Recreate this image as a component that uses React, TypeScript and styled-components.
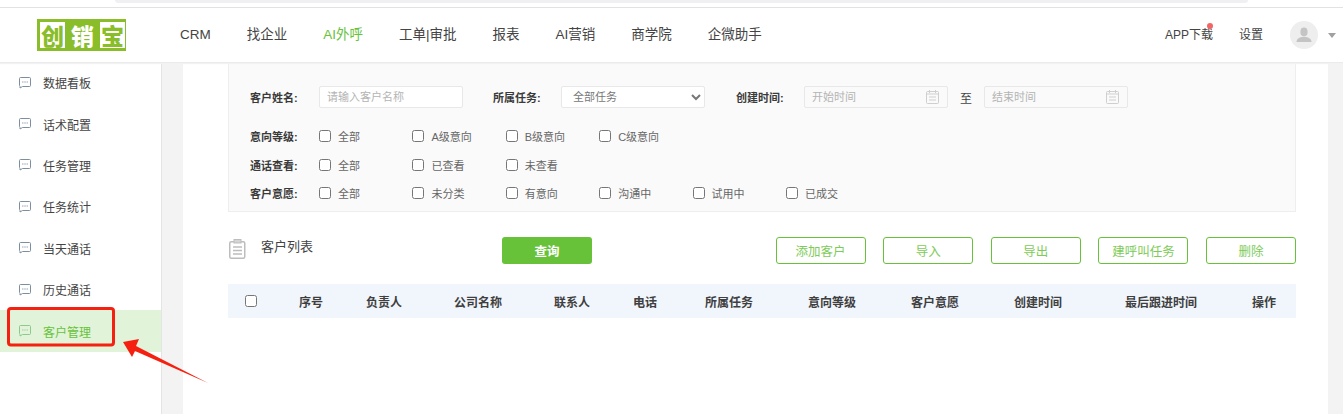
import React from "react";
import styled, { createGlobalStyle } from "styled-components";

const Global = createGlobalStyle`
  html, body { margin: 0; padding: 0; background: #fff; }
  body { font-family: "Liberation Sans", "Noto Sans CJK SC", sans-serif; color: #333; }
  * { box-sizing: border-box; }
`;

const Page = styled.div`
  position: relative;
  width: 1343px;
  height: 414px;
  overflow: hidden;
  display: flex;
  flex-direction: column;
`;

const BrowserStrip = styled.div`
  height: 8px;
  padding-left: 115px;
  padding-right: 95px;
  border-bottom: 1px solid #e2e2e2;
  flex: none;
`;
const StripTab = styled.div`
  height: 3px;
  background: #f0f0f3;
  border-radius: 0 0 8px 8px;
`;

const Header = styled.header`
  height: 55px;
  flex: none;
  display: flex;
  align-items: center;
  padding-left: 37px;
  border-bottom: 1px solid #ebebeb;
  box-shadow: 0 1px 1px #f2f2f2;
  position: relative;
  z-index: 1;
  background: #fff;
`;

const Logo = styled.div`
  width: 89px;
  height: 32px;
  background: #8abd2a;
  display: flex;
  align-items: center;
  gap: 5px;
  padding-left: 3px;
  flex: none;
`;
const LogoChar = styled.span<{ $inverse?: boolean }>`
  width: 25px;
  height: 26px;
  background: ${(p) => (p.$inverse ? "transparent" : "#fff")};
  color: ${(p) => (p.$inverse ? "#fff" : "#8abd2a")};
  font: 900 23px/26px "Noto Sans CJK SC", sans-serif;
  display: flex;
  align-items: center;
  justify-content: center;
`;

const Nav = styled.nav`
  display: flex;
  gap: 36px;
  margin-left: 54px;
  margin-top: -1px;
`;
const NavItem = styled.span<{ $active?: boolean }>`
  font-size: 13.5px;
  line-height: 20px;
  white-space: nowrap;
  color: ${(p) => (p.$active ? "#67c23a" : "#444")};
`;

const HeaderRight = styled.div`
  margin-left: auto;
  display: flex;
  align-items: center;
  padding-right: 7px;
`;
const HeaderLink = styled.span`
  position: relative;
  font-size: 12px;
  line-height: 18px;
  color: #444;
  white-space: nowrap;
  margin-right: 26px;
`;
const RedDot = styled.i`
  position: absolute;
  top: -3px;
  right: 0;
  width: 6px;
  height: 6px;
  border-radius: 50%;
  background: #f56464;
`;
const Avatar = styled.div`
  width: 28px;
  height: 28px;
  margin-left: 1px;
  border-radius: 50%;
  background: #eeeeee;
  display: flex;
  align-items: center;
  justify-content: center;
`;
const Caret = styled.i`
  width: 0;
  height: 0;
  margin-left: 10px;
  border-left: 4.5px solid transparent;
  border-right: 4.5px solid transparent;
  border-top: 5px solid #a0a0a0;
`;

const Body = styled.div`
  flex: 1;
  display: flex;
  background: #f3f3f3;
  min-height: 0;
`;

const Sidebar = styled.aside`
  width: 162px;
  flex: none;
  margin-top: -1px;
  background: #fff;
  border-right: 1px solid #e4e4e4;
`;
const SideItem = styled.div<{ $active?: boolean }>`
  height: 41.4px;
  display: flex;
  align-items: center;
  padding-left: 19px;
  gap: 12px;
  font-size: 12px;
  color: ${(p) => (p.$active ? "#67c23a" : "#444")};
  background: ${(p) => (p.$active ? "#e1f3d8" : "transparent")};
  svg { color: ${(p) => (p.$active ? "#8cc98c" : "#7d8e9e")}; flex: none; }
`;

const Main = styled.main`
  margin-left: 21px;
  width: 1145px;
  background: #fff;
  padding: 0 32px 0 45px;
`;

const FilterPanel = styled.section`
  height: 149px;
  background: #fafafa;
  border: 1px solid #eeeeee;
  border-top: none;
  padding: 23px 0 0 21px;
`;
const FieldRow = styled.div`
  display: flex;
  align-items: center;
  height: 22px;
  margin-bottom: 14px;
`;
const Label = styled.label<{ $w?: number }>`
  width: ${(p) => p.$w ?? 69}px;
  flex: none;
  font-size: 11px;
  font-weight: 700;
  color: #3a3a3a;
  white-space: nowrap;
`;
const FieldGap = styled.div<{ $w: number }>`
  width: ${(p) => p.$w}px;
  flex: none;
`;
const TextInput = styled.input`
  width: 144px;
  height: 22px;
  flex: none;
  padding: 0 7px;
  border: 1px solid #e8e8e8;
  border-radius: 2px;
  background: #fff;
  font: 11px "Liberation Sans", "Noto Sans CJK SC", sans-serif;
  color: #666;
  outline: none;
  &::placeholder { color: #b4b4b4; }
`;
const Select = styled.select`
  width: 144px;
  height: 22px;
  flex: none;
  padding: 0 7px;
  border: 1px solid #e8e8e8;
  border-radius: 2px;
  background: #fff;
  font: 11px "Liberation Sans", "Noto Sans CJK SC", sans-serif;
  color: #777;
  outline: none;
`;
const DateBox = styled.div`
  width: 144px;
  height: 22px;
  flex: none;
  display: flex;
  align-items: center;
  padding: 0 8px 0 7px;
  border: 1px solid #e8e8e8;
  border-radius: 2px;
  background: #fafafa;
  color: #cfcfcf;
`;
const DateInput = styled.input`
  flex: 1;
  width: 0;
  border: none;
  padding: 0;
  background: transparent;
  outline: none;
  font: 11px "Liberation Sans", "Noto Sans CJK SC", sans-serif;
  &::placeholder { color: #b4b4b4; }
`;
const ToText = styled.span`
  width: 36px;
  flex: none;
  text-align: center;
  font-size: 12px;
  color: #444;
`;

const CheckRow = styled.div`
  display: flex;
  align-items: center;
  height: 28.5px;
`;
const CheckCell = styled.label`
  width: 93.4px;
  flex: none;
  display: flex;
  align-items: center;
  gap: 7px;
  font-size: 11px;
  color: #666;
  white-space: nowrap;
`;
const Check = styled.input.attrs({ type: "checkbox" })`
  width: 12px;
  height: 12px;
  margin: 0;
  flex: none;
`;

const Toolbar = styled.div`
  display: flex;
  align-items: flex-start;
  margin-top: 25px;
  height: 27px;
`;
const TitleBlock = styled.div`
  width: 274px;
  flex: none;
  display: flex;
  align-items: flex-start;
  gap: 15px;
  padding-left: 1px;
  padding-top: 2px;
`;
const Title = styled.span`
  font-size: 13px;
  line-height: 14px;
  color: #444;
  padding-top: 1px;
`;
const PrimaryButton = styled.button`
  width: 90px;
  height: 27px;
  flex: none;
  border: none;
  border-radius: 3px;
  background: #67c23a;
  color: #fff;
  font: 700 12.5px "Liberation Sans", "Noto Sans CJK SC", sans-serif;
  padding: 0;
`;
const ActionGroup = styled.div`
  margin-left: auto;
  display: flex;
  gap: 17.6px;
`;
const GhostButton = styled.button`
  width: 90px;
  height: 27px;
  border: 1px solid #67c23a;
  border-radius: 3px;
  background: #fff;
  color: #7ecb58;
  font: 12.5px "Liberation Sans", "Noto Sans CJK SC", sans-serif;
  padding: 0;
`;

const TableHead = styled.div`
  margin-top: 20px;
  height: 34px;
  background: #f1f6fd;
  display: grid;
  grid-template-columns: 71px 67px 88px 100px 79px 72px 103px 103px 103px 111px 127px 44px;
  align-items: center;
  font-size: 12px;
  font-weight: 700;
  color: #3f3f3f;
  white-space: nowrap;
`;
const HeadCheck = styled(Check)`
  margin: -1px 0 0 17px;
`;

const Annotation = styled.svg`
  position: absolute;
  left: 0;
  top: 0;
  pointer-events: none;
`;

const navItems = ["CRM", "找企业", "AI外呼", "工单|审批", "报表", "AI营销", "商学院", "企微助手"];
const sideItems = ["数据看板", "话术配置", "任务管理", "任务统计", "当天通话", "历史通话", "客户管理"];
const checkRows: [string, string[]][] = [
  ["意向等级:", ["全部", "A级意向", "B级意向", "C级意向"]],
  ["通话查看:", ["全部", "已查看", "未查看"]],
  ["客户意愿:", ["全部", "未分类", "有意向", "沟通中", "试用中", "已成交"]],
];
const actions = ["添加客户", "导入", "导出", "建呼叫任务", "删除"];
const columns = ["序号", "负责人", "公司名称", "联系人", "电话", "所属任务", "意向等级", "客户意愿", "创建时间", "最后跟进时间", "操作"];

const ChatIcon = () => (
  <svg width="12" height="12" viewBox="0 0 12 12" fill="none" stroke="currentColor" strokeWidth="1">
    <path d="M1.5.5h9a1 1 0 0 1 1 1v7a1 1 0 0 1-1 1H3.5L1 11V9.5A1 1 0 0 1 .5 8.5v-7a1 1 0 0 1 1-1z" />
    <path d="M3.2 5h1.2M5.4 5h1.2M7.6 5h1.2" strokeWidth="1.2" />
  </svg>
);

const CalendarIcon = () => (
  <svg width="13" height="14" viewBox="0 0 13 14" fill="none" stroke="currentColor" strokeWidth="1">
    <rect x="0.5" y="1.5" width="12" height="12" rx="1" />
    <path d="M3.5 0v3M9.5 0v3M0.5 4h12M3 7h7M3 10h7" />
  </svg>
);

const NoteIcon = () => (
  <svg width="17" height="20" viewBox="0 0 17 20" fill="none" stroke="#bdbdbd">
    <rect x="0.75" y="2.75" width="15" height="16.5" rx="1.5" strokeWidth="1.5" />
    <rect x="5" y="0.5" width="7" height="3.5" fill="#d4d4d4" strokeWidth="1" />
    <path d="M4 8h9M4 11.5h9M4 15h9" strokeWidth="1.3" />
  </svg>
);

const PersonIcon = () => (
  <svg width="16" height="16" viewBox="0 0 16 16" fill="#c4c4c4">
    <ellipse cx="8" cy="5" rx="3.6" ry="4.4" />
    <path d="M0.5 15c0-3.2 3-4.6 5.2-5h4.6c2.2.4 5.2 1.8 5.2 5z" />
  </svg>
);

export default function App() {
  return (
    <Page>
      <Global />
      <BrowserStrip>
        <StripTab />
      </BrowserStrip>
      <Header>
        <Logo>
          <LogoChar>创</LogoChar>
          <LogoChar $inverse>销</LogoChar>
          <LogoChar>宝</LogoChar>
        </Logo>
        <Nav>
          {navItems.map((n) => (
            <NavItem key={n} $active={n === "AI外呼"}>{n}</NavItem>
          ))}
        </Nav>
        <HeaderRight>
          <HeaderLink>
            APP下载
            <RedDot />
          </HeaderLink>
          <HeaderLink>设置</HeaderLink>
          <Avatar>
            <PersonIcon />
          </Avatar>
          <Caret />
        </HeaderRight>
      </Header>
      <Body>
        <Sidebar>
          {sideItems.map((s) => (
            <SideItem key={s} $active={s === "客户管理"}>
              <ChatIcon />
              {s}
            </SideItem>
          ))}
        </Sidebar>
        <Main>
          <FilterPanel>
            <FieldRow>
              <Label>客户姓名:</Label>
              <TextInput placeholder="请输入客户名称" />
              <FieldGap $w={30} />
              <Label $w={68}>所属任务:</Label>
              <Select defaultValue="全部任务">
                <option>全部任务</option>
              </Select>
              <FieldGap $w={31} />
              <Label $w={68}>创建时间:</Label>
              <DateBox>
                <DateInput placeholder="开始时间" />
                <CalendarIcon />
              </DateBox>
              <ToText>至</ToText>
              <DateBox>
                <DateInput placeholder="结束时间" />
                <CalendarIcon />
              </DateBox>
            </FieldRow>
            {checkRows.map(([label, opts]) => (
              <CheckRow key={label}>
                <Label>{label}</Label>
                {opts.map((o) => (
                  <CheckCell key={o}>
                    <Check />
                    {o}
                  </CheckCell>
                ))}
              </CheckRow>
            ))}
          </FilterPanel>
          <Toolbar>
            <TitleBlock>
              <NoteIcon />
              <Title>客户列表</Title>
            </TitleBlock>
            <PrimaryButton>查询</PrimaryButton>
            <ActionGroup>
              {actions.map((a) => (
                <GhostButton key={a}>{a}</GhostButton>
              ))}
            </ActionGroup>
          </Toolbar>
          <TableHead>
            <HeadCheck />
            {columns.map((c) => (
              <span key={c}>{c}</span>
            ))}
          </TableHead>
        </Main>
      </Body>
      <Annotation width="1343" height="414" viewBox="0 0 1343 414">
        <rect x="8.5" y="308.5" width="105" height="36.5" rx="2.5" fill="none" stroke="#f5200f" strokeWidth="3" />
        <polygon points="123,342 139,339 136,346 208,383 135,351 132,357" fill="#f5200f" />
      </Annotation>
    </Page>
  );
}
